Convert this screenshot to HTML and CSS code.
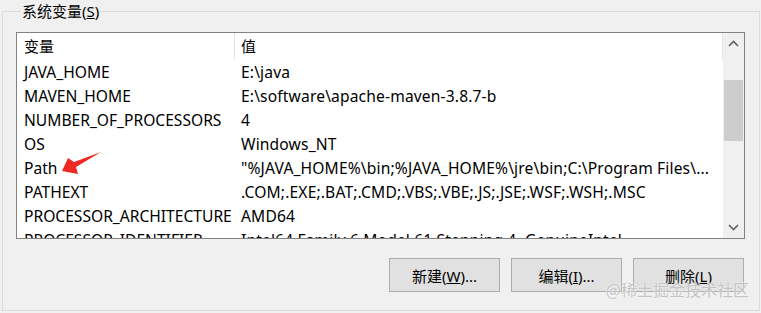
FILE: index.html
```html
<!DOCTYPE html>
<html>
<head>
    <meta charset="UTF-8">
    <title>系统变量</title>
    <link rel="stylesheet" href="styles.css">
</head>
<body>
    <div class="group">
        <div class="group-title">系统变量(<u>S</u>)</div>
        <div class="listbox">
            <div class="table">
                <div class="row head">
                    <div class="cell name">变量</div>
                    <div class="cell value">值</div>
                </div>
                <div class="row"><div class="cell name">JAVA_HOME</div><div class="cell value">E:\java</div></div>
                <div class="row"><div class="cell name">MAVEN_HOME</div><div class="cell value">E:\software\apache-maven-3.8.7-b</div></div>
                <div class="row"><div class="cell name">NUMBER_OF_PROCESSORS</div><div class="cell value">4</div></div>
                <div class="row"><div class="cell name">OS</div><div class="cell value">Windows_NT</div></div>
                <div class="row"><div class="cell name">Path</div><div class="cell value">"%JAVA_HOME%\bin;%JAVA_HOME%\jre\bin;C:\Program Files\...</div></div>
                <div class="row"><div class="cell name">PATHEXT</div><div class="cell value">.COM;.EXE;.BAT;.CMD;.VBS;.VBE;.JS;.JSE;.WSF;.WSH;.MSC</div></div>
                <div class="row"><div class="cell name">PROCESSOR_ARCHITECTURE</div><div class="cell value">AMD64</div></div>
                <div class="row"><div class="cell name">PROCESSOR_IDENTIFIER</div><div class="cell value">Intel64 Family 6 Model 61 Stepping 4, GenuineIntel</div></div>
                <!-- red arrow pointing at Path -->
                <svg class="arrow" width="60" height="40" viewBox="0 0 60 40">
                    <polygon points="9,25 15,12 21,16 48,6 23,21 25,28" fill="#ee2a24"/>
                </svg>
            </div>
            <div class="scrollbar">
                <div class="sb-btn">
                    <svg width="11" height="7" viewBox="0 0 11 7"><polyline points="1,6 5.5,1.5 10,6" fill="none" stroke="#606060" stroke-width="1.6"/></svg>
                </div>
                <div class="sb-track">
                    <div class="sb-thumb"></div>
                </div>
                <div class="sb-btn">
                    <svg width="11" height="7" viewBox="0 0 11 7"><polyline points="1,1 5.5,5.5 10,1" fill="none" stroke="#606060" stroke-width="1.6"/></svg>
                </div>
            </div>
        </div>
        <div class="buttons">
            <button type="button">新建(<u>W</u>)...</button>
            <button type="button">编辑(<u>I</u>)...</button>
            <button type="button">删除(<u>L</u>)</button>
        </div>
        <div class="watermark">@稀土掘金技术社区</div>
    </div>
</body>
</html>
```

FILE: styles.css
```css
body {
    margin: 0;
    background-color: #f0f0f0;
    font-family: "Noto Sans", "Noto Sans CJK SC", sans-serif;
    font-size: 15px;
    color: #000;
    overflow: hidden;
}
.group {
    position: relative;
    margin: 11px 1px 0 2px;
    height: 300px;
    box-sizing: border-box;
    border: 1px solid #dcdcdc;
    padding: 0 14px 0 13px;
}
.group-title {
    display: inline-block;
    margin: -11px 0 0 5px;
    padding: 0 1px;
    line-height: 20px;
    background-color: #f0f0f0;
    vertical-align: top;
}
.listbox {
    height: 207px;
    box-sizing: border-box;
    border: 1px solid #828282;
    background-color: #fff;
    display: flex;
    overflow: hidden;
}
.table {
    position: relative;
    flex: 1;
    overflow: hidden;
}
.row {
    display: grid;
    grid-template-columns: 217px 1fr;
    height: 24px;
    line-height: 24px;
    white-space: nowrap;
    font-size: 15.6px;
}
.row.head {
    height: 27px;
    line-height: 27px;
    font-size: 15px;
}
.cell {
    overflow: hidden;
}
.name {
    padding-left: 7px;
}
.value {
    padding-left: 7px;
    letter-spacing: 0.15px;
}
.head .value {
    border-left: 1px solid #e5e5e5;
    border-right: 1px solid #e5e5e5;
    padding-left: 6px;
}
.arrow {
    position: absolute;
    left: 36px;
    top: 113px;
}
.scrollbar {
    width: 21px;
    background-color: #f0f0f0;
    display: flex;
    flex-direction: column;
}
.sb-btn {
    height: 21px;
    display: flex;
    align-items: center;
    justify-content: center;
}
.scrollbar .sb-btn:first-child {
    height: 24px;
    padding-bottom: 3px;
    box-sizing: border-box;
}
.sb-track {
    flex: 1;
    padding: 23px 1px 0 1px;
}
.sb-thumb {
    height: 61px;
    background-color: #cdcdcd;
}
.buttons {
    display: flex;
    justify-content: flex-end;
    gap: 11px;
    margin: 19px 1px 0 0;
}
.buttons button {
    width: 111px;
    height: 34px;
    border: 1px solid #adadad;
    background-color: #e1e1e1;
    font-family: "Noto Sans", "Noto Sans CJK SC", sans-serif;
    font-size: 15px;
    color: #000;
    padding: 0;
}
.watermark {
    position: absolute;
    right: 10px;
    bottom: 9px;
    font-family: "Noto Sans CJK SC", sans-serif;
    font-size: 16px;
    color: #c4c4c4;
    text-shadow: 0 0 2px #fff;
}
```
